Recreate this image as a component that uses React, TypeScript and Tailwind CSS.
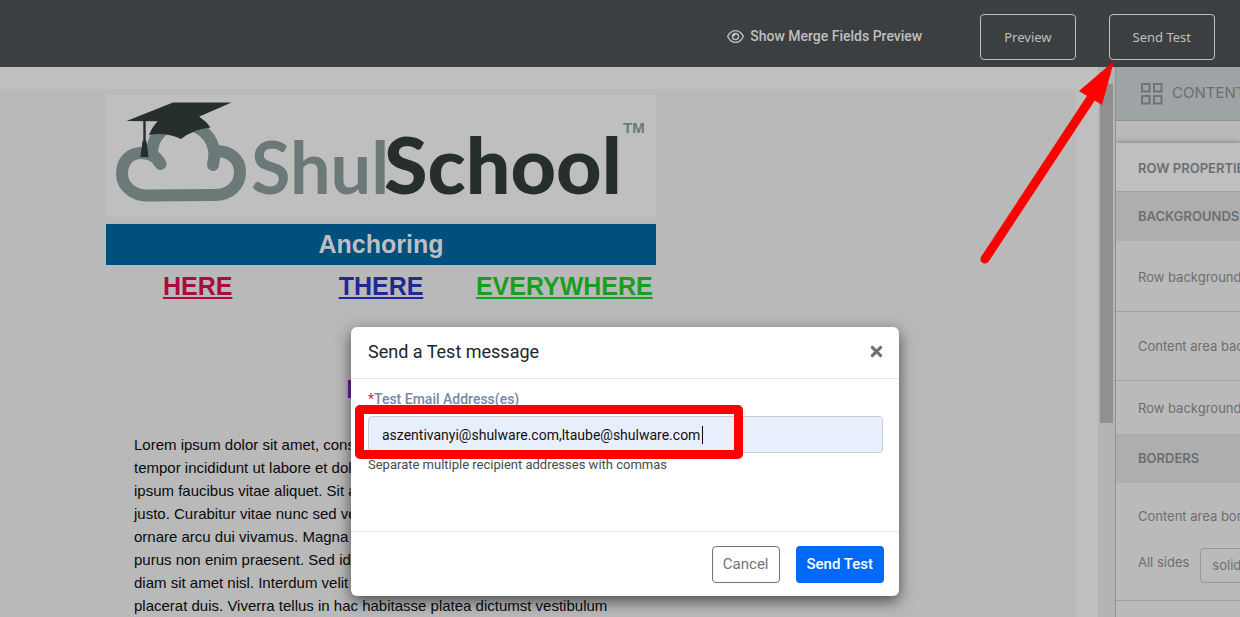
import { useState } from 'react';
import { FaTimes } from 'react-icons/fa';
import { FaRegEye } from 'react-icons/fa6';

const LOREM = [
  'Lorem ipsum dolor sit amet, consectetur adipiscing elit, sed do eiusmod',
  'tempor incididunt ut labore et dolore magna aliqua. Est ultricies integer',
  'ipsum faucibus vitae aliquet. Sit amet mattis vulputate enim nulla aliquet',
  'justo. Curabitur vitae nunc sed velit dignissim sodales ut eu sem integer',
  'ornare arcu dui vivamus. Magna sit amet purus gravida quis blandit turpis',
  'purus non enim praesent. Sed id semper risus in hendrerit gravida rutrum',
  'diam sit amet nisl. Interdum velit euismod in pellentesque massa',
  'placerat duis. Viverra tellus in hac habitasse platea dictumst vestibulum',
];

function Logo() {
  return (
    <svg viewBox="0 0 550 122" className="block w-full" role="img" aria-label="ShulSchool">
      {/* cloud */}
      <g fill="none" stroke="#6b7a78" strokeWidth="12" strokeLinecap="round" strokeLinejoin="round">
        <path d="M54.5 69 C51 62 44 58 35 58 C24 58 16 66 16 79 C16 91 27 100.5 41 100.5 L109 100 C124 100 134 90 134 77 C134 64 124 56 110 56" />
        <path d="M46 58 C46 42 58 29 76 29 C94 29 108 42 108.500 60 L107 70" />
      </g>
      {/* graduation cap */}
      <g fill="#262e2e">
        <path d="M43 40 Q46 32 52 26 L93 21.500 Q100 26 104.500 32.500 Q88 34 75 44 Q60 37 43 40Z" />
        <path d="M20.500 26 L67 7.500 L125.500 7.500 L82 26.500Z" />
        <path d="M37.300 25h2.400v19.500l1 3 1.800 14.500h-8l1.800-14.500 1-3z" />
      </g>
      <text x="145" y="99" fontFamily="Lato" fontWeight="700" fontSize="72" fill="#6b7a78">Shul</text>
      <text x="278" y="99" fontFamily="Lato" fontWeight="900" fontSize="79" fill="#262e2e">School</text>
      <text x="517" y="38" fontFamily="Liberation Sans" fontWeight="700" fontSize="15" fill="#6b7a78">TM</text>
    </svg>
  );
}

function Email() {
  return (
    <div className="w-[550px] font-['Liberation_Sans',sans-serif]">
      <div className="bg-[#bfbfbf]">
        <Logo />
      </div>
      <h1 className="mt-[7px] bg-[#004f7c] text-center text-[25px] leading-[41px] font-bold text-[#bfbfbf]">
        Anchoring
      </h1>
      <nav className="grid grid-cols-3 text-center text-[25px] leading-[42px] font-bold">
        <a href="#here" className="text-[#a80c40] underline">HERE</a>
        <a href="#there" className="text-[#202a94] underline">THERE</a>
        <a href="#everywhere" className="text-[#1a9e1e] underline">EVERYWHERE</a>
      </nav>
      <h2 id="here" className="mt-16 text-center text-[25px] leading-9 font-bold text-[#6a1b9a]">HERE</h2>
      <p className="mt-[26px] pl-7 text-[15px] leading-[23px] whitespace-nowrap text-[#0a0a0a]">
        {LOREM.map((line) => (
          <span key={line} className="block">{line}</span>
        ))}
      </p>
    </div>
  );
}

function Sidebar() {
  return (
    <aside className="w-[125px] shrink-0 overflow-hidden border-l border-[#929292] bg-[#bababa] font-[Inter,sans-serif] text-[13px] whitespace-nowrap text-[#6b6f71]">
      <button className="flex h-[54px] w-full items-center gap-[9px] border-b border-[#929292] bg-[#9ea3a6] pl-6 text-[15px]">
        <svg width="23" height="23" viewBox="0 0 23 23" fill="none" stroke="#6f7375" strokeWidth="2" className="shrink-0">
          <path d="M2 2h7.500v7.500H2zM14 2h7.500v7.500H14zM2 14h7.500v7.500H2zM14 14h7.500v7.500H14z" />
        </svg>
        CONTENT
      </button>
      <div className="h-[22px]" />
      <h3 className="h-[49px] border-b border-[#a0a0a0] bg-[#bfbfbf] pl-[22px] leading-[50px] font-semibold shadow-[0_0_6px_rgba(0,0,0,0.4)]">
        ROW PROPERTIES
      </h3>
      <h4 className="h-[49px] bg-[#aeaeae] pl-[22px] leading-[49px] font-semibold">BACKGROUNDS</h4>
      <div className="h-[71px] border-b border-[#a0a0a0] pl-[22px] leading-[72px]">Row background color</div>
      <div className="h-[69px] border-b border-[#a0a0a0] pl-[22px] leading-[68px]">Content area background color</div>
      <div className="h-[53px] pl-[22px] leading-[54px]">Row background image</div>
      <h4 className="h-[49px] bg-[#aeaeae] pl-[22px] leading-[49px] font-semibold">BORDERS</h4>
      <div className="border-b border-[#a0a0a0] pt-5 pb-[17px] pl-[22px]">
        <div className="leading-[26px]">Content area borders</div>
        <div className="mt-[19px] flex items-center gap-[11px]">
          <label htmlFor="sides" className="pb-[6px]">All sides</label>
          <select id="sides" className="h-[35px] w-28 shrink-0 appearance-none rounded border border-[#999] px-[11px]">
            <option>solid</option>
          </select>
        </div>
      </div>
    </aside>
  );
}

function TestModal() {
  const [emails, setEmails] = useState('aszentivanyi@shulware.com,ltaube@shulware.com');

  return (
    <div className="absolute inset-0 flex items-start justify-center pt-[327px] pl-[10px]">
      <div
        role="dialog"
        aria-labelledby="modal-title"
        className="w-[548px] rounded-md bg-white font-[Roboto,sans-serif] shadow-[0_5px_15px_rgba(0,0,0,0.6)]"
      >
        <div className="flex h-[52px] items-center justify-between border-b border-[#e3e5e7] pr-[14px] pb-[2px] pl-[17px]">
          <h2 id="modal-title" className="text-lg text-[#212529]">Send a Test message</h2>
          <button aria-label="Close" className="text-[#68727c]">
            <FaTimes size={17} />
          </button>
        </div>
        <div className="h-[152px] pt-[10px] pr-4 pl-[17px]">
          <label htmlFor="emails" className="block text-sm leading-5 font-medium text-[#7688a0]">
            <span className="font-normal text-[#e0244a]">*</span>Test Email Address(es)
          </label>
          <div className="relative mt-[7px]">
            <input
              id="emails"
              value={emails}
              onChange={(e) => setEmails(e.target.value)}
              className="block h-[37px] w-full rounded border border-[#c8ccd1] bg-[#e8effc] px-[13px] text-sm text-[#111]"
            />
            <span className="absolute top-[10px] left-[334px] h-[18px] w-px bg-black" />
            <span className="pointer-events-none absolute -top-[11px] -left-[13px] h-[54px] w-[388px] rounded-[5px] border-[9px] border-[#ff0000]" />
          </div>
          <p className="mt-[2px] text-[13px] leading-5 text-[#444b52]">Separate multiple recipient addresses with commas</p>
        </div>
        <div className="flex h-[65px] items-center justify-end gap-4 border-t border-[#e3e5e7] px-[15px]">
          <button className="h-[37px] rounded border border-[#6c757d] px-[10px] text-[15px] text-[#6c757d]">Cancel</button>
          <button className="h-[37px] rounded bg-[#0069f8] px-[11px] text-[15px] font-medium text-white">Send Test</button>
        </div>
      </div>
    </div>
  );
}

export default function App() {
  return (
    <div className="relative flex h-screen flex-col overflow-hidden bg-[#b9b9b9]">
      <header className="flex h-[67px] shrink-0 items-center justify-end bg-[#3c3f41] pt-[7px] pr-[25px] text-sm text-[#bfbfbf]">
        <button className="mr-[58px] flex items-center gap-[6px] pb-[2px] font-[Roboto,sans-serif] font-medium">
          <FaRegEye size={17} />
          Show Merge Fields Preview
        </button>
        <button className="mr-[33px] h-[46px] rounded border border-[#bfbfbf] px-[23px] font-['Noto_Sans',sans-serif] text-[13px]">
          Preview
        </button>
        <button className="h-[46px] rounded border border-[#bfbfbf] px-[23px] font-['Noto_Sans',sans-serif] text-[13px]">
          Send Test
        </button>
      </header>

      <div className="flex min-h-0 flex-1">
        <main className="flex min-w-0 flex-1 flex-col bg-[#bfbfbf] pt-[22px] pr-[22px]">
          <div className="min-h-0 flex-1 overflow-hidden bg-[#b9b9b9] pt-[6px] pl-[106px]">
            <Email />
          </div>
        </main>
        {/* scrollbar */}
        <div className="w-[17px] shrink-0 bg-[#b3b3b3] pt-[17px] pr-[2px] pl-[2px]">
          <div className="h-[339px] bg-[#909090]" />
        </div>
        <Sidebar />
      </div>

      <TestModal />

      <svg
        width="145"
        height="215"
        viewBox="975 55 145 215"
        className="pointer-events-none absolute top-[55px] right-[120px]"
        aria-hidden="true"
      >
        <path d="M985 259 L1091 98" stroke="#f00" strokeWidth="9" strokeLinecap="round" />
        <path d="M1114 61 L1079 91 L1102 105Z" fill="#f00" />
      </svg>
    </div>
  );
}
